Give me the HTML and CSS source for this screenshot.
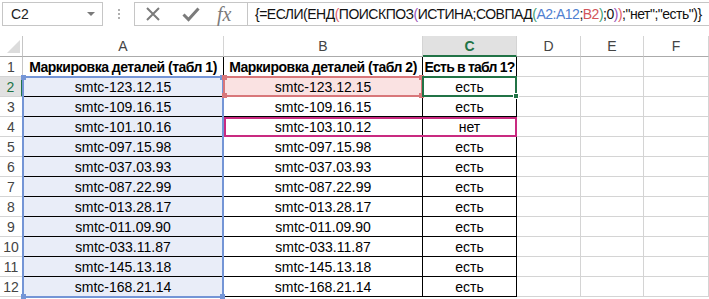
FILE: index.html
```html
<!DOCTYPE html>
<html lang="ru">
<head>
<meta charset="utf-8">
<title>Excel</title>
<link rel="stylesheet" href="styles.css">
</head>
<body>
<div class="fbar">
  <div class="namebox"><span class="nb-text">C2</span><svg class="nb-arrow" width="8" height="4" viewBox="0 0 8 4"><polygon points="0,0 8,0 4,4" fill="#7a7a7a"/></svg></div>
  <div class="grip"><i></i><i></i><i></i></div>
  <div class="editbox">
    <div class="ebtns">
      <svg class="ic" width="16" height="16" viewBox="0 0 16 16"><path d="M2 2 L14 14 M14 2 L2 14" stroke="#7b7b7b" stroke-width="2" fill="none"/></svg>
      <svg class="ic" width="18" height="16" viewBox="0 0 18 16"><path d="M1.5 8.5 L6.5 13.5 L16.5 2.5" stroke="#7b7b7b" stroke-width="3" fill="none"/></svg>
      <span class="fx">fx</span>
    </div>
    <div class="formula">{=ЕСЛИ(ЕНД<span class="p1">(</span>ПОИСКПОЗ<span class="p2">(</span>ИСТИНА;СОВПАД<span class="p3">(</span><span class="ra">A2:A12</span>;<span class="rb">B2</span><span class="p3">)</span>;0<span class="p2">)</span><span class="p1">)</span>;"нет";"есть")}</div>
  </div>
</div>
<div class="wrap">
<div class="sheet">
  <div class="corner"><svg width="13" height="13" viewBox="0 0 13 13"><polygon points="13,0 13,13 0,13" fill="#dcdcdc"/></svg></div>
  <div class="ch">A</div><div class="ch">B</div><div class="ch selc">C</div><div class="ch">D</div><div class="ch">E</div><div class="ch">F</div>

  <div class="rh">1</div><div class="c t b">Маркировка деталей (табл 1)</div><div class="c t b">Маркировка деталей (табл 2)</div><div class="c t b narrow">Есть в табл 1?</div><div class="c"></div><div class="c"></div><div class="c"></div>
  <div class="rh selr">2</div><div class="c t fa">smtc-123.12.15</div><div class="c t fb">smtc-123.12.15</div><div class="c t">есть</div><div class="c"></div><div class="c"></div><div class="c"></div>
  <div class="rh">3</div><div class="c t fa">smtc-109.16.15</div><div class="c t">smtc-109.16.15</div><div class="c t">есть</div><div class="c"></div><div class="c"></div><div class="c"></div>
  <div class="rh">4</div><div class="c t fa">smtc-101.10.16</div><div class="c t">smtc-103.10.12</div><div class="c t">нет</div><div class="c"></div><div class="c"></div><div class="c"></div>
  <div class="rh">5</div><div class="c t fa">smtc-097.15.98</div><div class="c t">smtc-097.15.98</div><div class="c t">есть</div><div class="c"></div><div class="c"></div><div class="c"></div>
  <div class="rh">6</div><div class="c t fa">smtc-037.03.93</div><div class="c t">smtc-037.03.93</div><div class="c t">есть</div><div class="c"></div><div class="c"></div><div class="c"></div>
  <div class="rh">7</div><div class="c t fa">smtc-087.22.99</div><div class="c t">smtc-087.22.99</div><div class="c t">есть</div><div class="c"></div><div class="c"></div><div class="c"></div>
  <div class="rh">8</div><div class="c t fa">smtc-013.28.17</div><div class="c t">smtc-013.28.17</div><div class="c t">есть</div><div class="c"></div><div class="c"></div><div class="c"></div>
  <div class="rh">9</div><div class="c t fa">smtc-011.09.90</div><div class="c t">smtc-011.09.90</div><div class="c t">есть</div><div class="c"></div><div class="c"></div><div class="c"></div>
  <div class="rh">10</div><div class="c t fa">smtc-033.11.87</div><div class="c t">smtc-033.11.87</div><div class="c t">есть</div><div class="c"></div><div class="c"></div><div class="c"></div>
  <div class="rh">11</div><div class="c t fa">smtc-145.13.18</div><div class="c t">smtc-145.13.18</div><div class="c t">есть</div><div class="c"></div><div class="c"></div><div class="c"></div>
  <div class="rh">12</div><div class="c t fa">smtc-168.21.14</div><div class="c t">smtc-168.21.14</div><div class="c t">есть</div><div class="c"></div><div class="c"></div><div class="c"></div>
</div>
<div class="overlay">
  <div class="ov ov-a"><i class="h tl"></i><i class="h tr"></i><i class="h bl"></i><i class="h br"></i></div>
  <div class="ov ov-b"><i class="h tl"></i><i class="h tr"></i><i class="h bl"></i><i class="h br"></i></div>
  <div class="ov ov-m"></div>
  <div class="ov ov-c"><i class="fill"></i></div>
</div>
</div>
</body>
</html>
```
FILE: styles.css
```css
* { box-sizing: border-box; }
body {
  margin: 0;
  background: #fff;
  width: 709px;
  height: 299px;
  overflow: hidden;
  font-family: "Liberation Sans", Arial, sans-serif;
  color: #000;
}
.fbar {
  display: flex;
  align-items: center;
  height: 28px;
  padding-top: 2px;
  padding-bottom: 2px;
}
.namebox {
  flex: 0 0 101px;
  margin-left: 2px;
  height: 24px;
  border: 1px solid #c6c6c6;
  display: flex;
  align-items: center;
  justify-content: space-between;
  padding: 0 7px 0 8px;
}
.nb-text { font-size: 14px; color: #222; }
.grip {
  flex: 0 0 31px;
  height: 24px;
  display: flex;
  flex-direction: column;
  align-items: center;
  justify-content: center;
  gap: 2px;
}
.grip i { display: block; width: 2px; height: 2px; background: #b0b0b0; }
.editbox {
  flex: 1 1 auto;
  min-width: 0;
  height: 24px;
  border: 1px solid #c6c6c6;
  border-right: none;
  display: flex;
  align-items: center;
}
.ebtns {
  flex: 0 0 112px;
  height: 100%;
  display: flex;
  align-items: center;
  padding-left: 10px;
  gap: 21px;
}
.ic { display: block; }
.fx {
  font-family: "Liberation Serif", serif;
  font-style: italic;
  font-size: 20px;
  color: #7b7b7b;
  margin-left: -4px;
  line-height: 1;
}
.formula {
  flex: 1 1 auto;
  min-width: 0;
  overflow: hidden;
  height: 100%;
  border-left: 1px solid #c6c6c6;
  padding-left: 7px;
  display: flex;
  align-items: center;
  font-size: 14px;
  letter-spacing: -0.5px;
  white-space: nowrap;
  color: #111;
}
.p1 { color: #e0626b; }
.p2 { color: #9a52b8; }
.p3 { color: #3f9f76; }
.ra { color: #4f7fd1; }
.rb { color: #d2545a; }

.wrap {
  margin-top: 8px;
  display: grid;
}
.sheet, .overlay {
  grid-area: 1 / 1;
  display: grid;
  grid-template-columns: 23px 201px 199px 94px 64px 63px 65px;
  grid-template-rows: 21px repeat(12, 20px);
}
.overlay { pointer-events: none; z-index: 2; }
.corner {
  border-right: 1px solid #c6c6c6;
  border-bottom: 1px solid #ababab;
  display: flex;
  align-items: flex-end;
  justify-content: flex-end;
  padding: 0 2px 3px 0;
}
.corner svg { display: block; }
.ch {
  border-right: 1px solid #d4d4d4;
  border-bottom: 1px solid #ababab;
  display: flex;
  align-items: center;
  justify-content: center;
  color: #444;
  font-size: 14px;
}
.ch.selc {
  background: #e1e1e1;
  color: #217346;
  font-weight: bold;
  border-bottom: 2px solid #217346;
}
.rh {
  border-right: 1px solid #c6c6c6;
  border-bottom: 1px solid #d4d4d4;
  display: flex;
  align-items: center;
  justify-content: center;
  color: #444;
  font-size: 14px;
}
.rh.selr {
  background: #e1e1e1;
  color: #217346;
  border-right: 2px solid #217346;
}
.c {
  border-right: 1px solid #d4d4d4;
  border-bottom: 1px solid #d4d4d4;
  display: flex;
  align-items: center;
  justify-content: center;
  white-space: nowrap;
  overflow: hidden;
  font-size: 14px;
}
.c.t { border-color: #000; }
.c.b { font-weight: bold; letter-spacing: -0.5px; }
.c.b.narrow { letter-spacing: -0.8px; }
.fa { background: #e9edf8; }
.fb { background: #fae2e2; }

.ov { position: relative; }
.ov-a {
  grid-column: 2 / 3;
  grid-row: 3 / 14;
  margin: -1px 0 -1px -1px;
  border: 2px solid #7495d6;
}
.ov-b {
  grid-column: 3 / 4;
  grid-row: 3 / 4;
  margin: -1px 0 0 -1px;
  border: 2px solid #d8777a;
}
.ov-m {
  grid-column: 3 / 5;
  grid-row: 5 / 6;
  border: 2px solid #c92a80;
}
.ov-c {
  grid-column: 4 / 5;
  grid-row: 3 / 4;
  margin: -1px 0 0 -1px;
  border: 2px solid #217346;
  z-index: 3;
}
.h {
  position: absolute;
  width: 5px;
  height: 5px;
}
.ov-a .h { background: #7495d6; }
.ov-b .h { background: #d8777a; }
.h.tl { left: -3px; top: -3px; }
.h.tr { right: -3px; top: -3px; }
.h.bl { left: -3px; bottom: -3px; }
.h.br { right: -3px; bottom: -3px; }
.fill {
  position: absolute;
  right: -4px;
  bottom: -4px;
  width: 6px;
  height: 6px;
  background: #217346;
  border: 1px solid #fff;
}
```
